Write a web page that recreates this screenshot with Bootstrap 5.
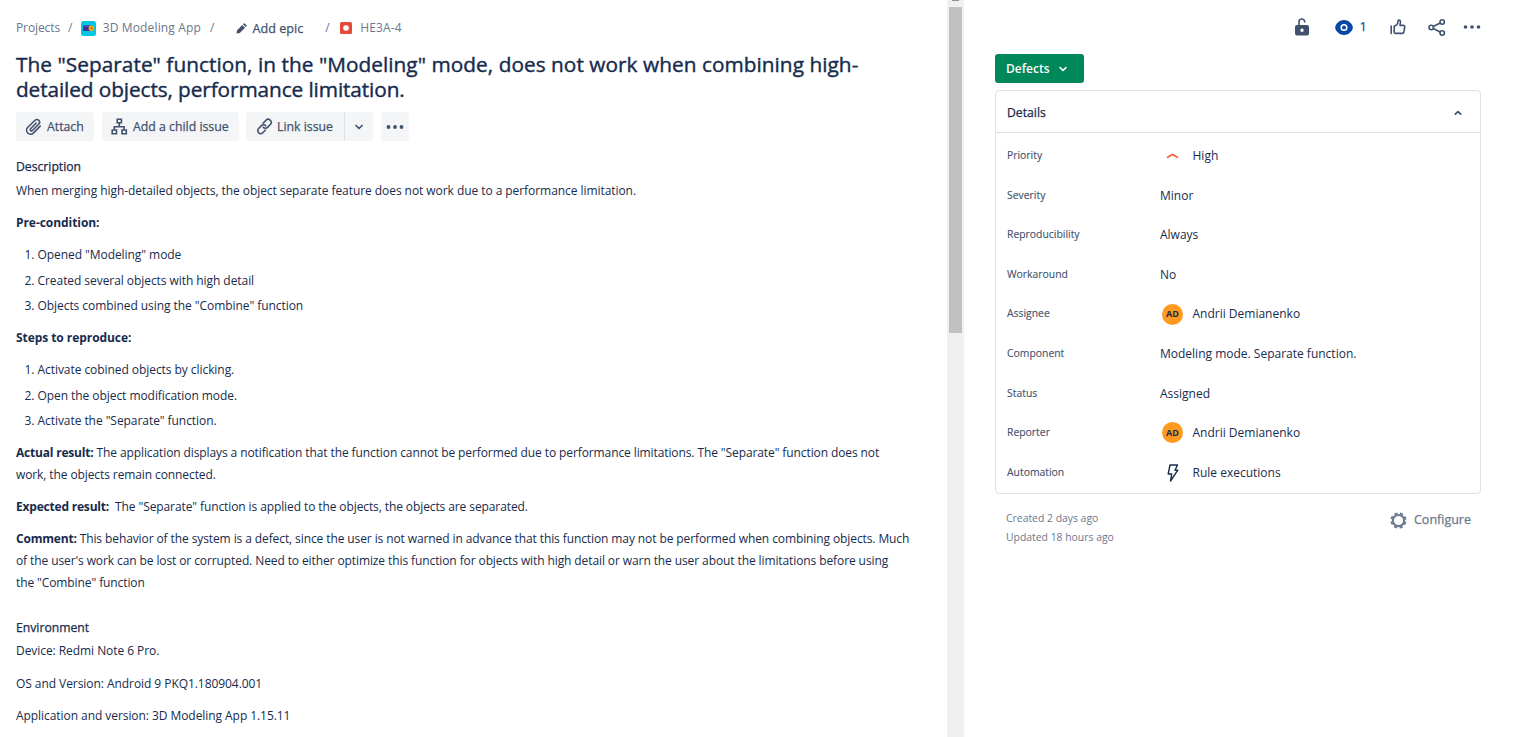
<!DOCTYPE html>
<html lang="en">
<head>
<meta charset="utf-8">
<title>HE3A-4</title>
<link href="https://cdn.jsdelivr.net/npm/bootstrap@5.3.0/dist/css/bootstrap.min.css" rel="stylesheet">
<style>
body{font-family:"Open Sans","Noto Sans",sans-serif;font-size:12px;line-height:21.6px;color:#172b4d;background:#fff;height:737px;overflow:hidden}
svg{display:block;flex:none}
.medium{-webkit-text-stroke:.25px currentColor}
.issue{width:947px;padding:0 16px;white-space:nowrap}
.crumbs{height:24px;margin-top:16px;color:#6b778c;letter-spacing:.15px}
.crumbs .root{letter-spacing:-.1px}
.crumbs .epic{color:#42526e;font-size:12.6px;letter-spacing:0;padding-top:1px}
.issue h1{font-size:20.8px;line-height:25px;font-weight:400;margin:12px 0 10px;letter-spacing:.04px;-webkit-text-stroke:.4px currentColor}
.issue h1 .rest{letter-spacing:-.1px}
.tool{background:#f4f5f7;color:#42526e;height:29px;border-radius:3px;border:0;padding:0;font-size:12.3px}
.tool.split-l{border-radius:3px 0 0 3px;border-right:1px solid #dfe1e6}
.tool.split-r{border-radius:0 3px 3px 0}
.sub{font-size:12.2px;line-height:18px;font-weight:400;margin:0}
.doc{margin-top:3.7px;letter-spacing:-.06px}
.doc p{margin:0 0 10.8px}
.doc ol{margin:0 0 10.8px;padding-left:21.5px}
.doc li{margin-bottom:3.5px}
.doc li:last-child{margin-bottom:0}
.doc b{font-weight:700}
.doc .long{letter-spacing:-.1px}
.doc .long b,.doc .tight b{letter-spacing:-.2px}
.doc .tight{letter-spacing:-.1px}
.track{width:17px;background:#f0f0f0}
.cap{width:7px;height:1px;background:#8f8f8f}
.thumb{width:13px;margin-top:6px;height:326px;background:#c1c1c1}
.side{width:486px;margin-left:31px}
.acts{height:24px;margin-top:15px;color:#42526e}
.status{background:#00875a;color:#fff;width:89px;height:29px;border-radius:3px;font-weight:600;border:0;padding:0 0 0 11px;margin-top:15px}
.panel{border:1px solid #dfe1e6;border-radius:4px;margin-top:7px;height:404px}
.panel-top{height:42px;border-bottom:1px solid #dfe1e6;padding:2px 18px 0 11px;font-size:12.2px}
.fields{padding-top:3px}
.field{height:39.6px;padding-left:11px}
.key{width:153px;font-size:10.4px;color:#42526e;-webkit-text-stroke:.12px currentColor}
.slot{width:32.5px}
.ava{width:21px;height:21px;border-radius:50%;background:#ff991f;font-size:9px;font-weight:700;margin-left:2px}
.stamp{font-size:10.4px;line-height:19px;color:#6b778c;padding:1px 0 0 11px}
.conf{color:#6b778c;font-size:12.5px;padding-right:10px}
</style>
</head>
<body>
<div class="d-flex h-100">
<main class="issue">
 <nav class="crumbs d-flex align-items-center">
  <span class="root">Projects</span><span style="margin:0 8px">/</span>
  <svg width="15" height="15" viewBox="0 0 15 15"><rect width="15" height="15" rx="2.500" fill="#00c7e6"/><rect x="2" y="4.500" width="8" height="5.500" rx=".6" fill="#403294"/><rect x="2" y="4.500" width="6" height="1.500" fill="#5243aa"/><circle cx="10.400" cy="7.200" r="2.800" fill="#ffab00"/><circle cx="10.600" cy="7.200" r="1" fill="#a35a16"/></svg>
  <span style="margin-left:7px">3D Modeling App</span><span style="margin:0 21.5px 0 9px">/</span>
  <svg width="11" height="11" viewBox="0 0 11 11" fill="#42526e"><path d="M1.100 7.200 6.300 2l2.700 2.700-5.200 5.200L.4 10.600zM7 1.300l.8-.8q.5-.4 1 0l1.700 1.700q.4.5 0 1l-.8.8z"/></svg>
  <span class="epic medium" style="margin-left:5.500px">Add epic</span><span style="margin:0 10px 0 22px">/</span>
  <svg width="12" height="12" viewBox="0 0 12 12"><rect width="12" height="12" rx="1.500" fill="#e5493a"/><circle cx="6" cy="6" r="2.800" fill="#fff"/></svg>
  <span style="margin-left:8.500px">HE3A-4</span>
 </nav>
 <h1>The "Separate" function, in the "Modeling" mode, does not work when combining high-<br><span class="rest">detailed objects, performance limitation.</span></h1>
 <div class="d-flex">
  <button class="tool medium d-flex align-items-center" style="width:78px;padding-left:9px"><svg width="17" height="17" viewBox="0 0 17 17" fill="none" stroke="#42526e" stroke-width="1.600" stroke-linecap="round"><path d="M11.200 5 5.600 10.800a1.200 1.200 0 0 0 1.800 1.700L13.800 6a2.600 2.600 0 0 0-3.800-3.700L2.600 9.500a4 4 0 0 0 5.700 5.600l6.900-7"/></svg><span style="margin-left:5px">Attach</span></button>
  <button class="tool medium d-flex align-items-center" style="width:137px;margin-left:8px;padding-left:9px"><svg width="17" height="17" viewBox="0 0 17 17" fill="none" stroke="#42526e" stroke-width="1.600"><path d="M6.200 1.200h4.200v3.600H6.200zM1.200 12h4.300v3.800H1.200zM11 12h4.300v3.800H11zM8.300 5v3.700M3.300 12V8.700h9.800V12"/></svg><span style="margin-left:5px">Add a child issue</span></button>
  <button class="tool split-l medium d-flex align-items-center" style="width:99px;margin-left:7px;padding-left:10px"><svg width="17" height="17" viewBox="0 0 17 17" fill="none" stroke="#42526e" stroke-width="1.600" stroke-linecap="round"><path d="M7.200 5.100 10 2.300a2.900 2.900 0 0 1 4.300 4.200l-2.800 2.900a2.900 2.900 0 0 1-4.200 0M9.500 12l-2.700 2.700a2.900 2.900 0 0 1-4.200-4.200l2.800-2.900a2.900 2.900 0 0 1 4.200 0"/></svg><span style="margin-left:4px">Link issue</span></button>
  <button class="tool split-r d-flex align-items-center justify-content-center" style="width:28px"><svg width="8" height="6" viewBox="0 0 8 6" fill="none" stroke="#42526e" stroke-width="1.700" stroke-linecap="round" stroke-linejoin="round"><path d="M1 1.500l3 3 3-3"/></svg></button>
  <button class="tool d-flex align-items-center justify-content-center" style="width:28px;margin-left:8px"><svg width="18" height="4" viewBox="0 0 18 4" fill="#42526e"><circle cx="2.500" cy="2" r="1.900"/><circle cx="9" cy="2" r="1.900"/><circle cx="15.500" cy="2" r="1.900"/></svg></button>
 </div>
 <h2 class="sub medium" style="margin-top:17px">Description</h2>
 <div class="doc">
  <p>When merging high-detailed objects, the object separate feature does not work due to a performance limitation.</p>
  <p><b>Pre-condition:</b></p>
  <ol><li>Opened "Modeling" mode</li><li>Created several objects with high detail</li><li>Objects combined using the "Combine" function</li></ol>
  <p><b>Steps to reproduce:</b></p>
  <ol><li>Activate cobined objects by clicking.</li><li>Open the object modification mode.</li><li>Activate the "Separate" function.</li></ol>
  <p class="long"><b>Actual result:</b> The application displays a notification that the function cannot be performed due to performance limitations. The "Separate" function does not<br>work, the objects remain connected.</p>
  <p class="tight"><b>Expected result:</b>&nbsp; The "Separate" function is applied to the objects, the objects are separated.</p>
  <p class="long"><b>Comment:</b> This behavior of the system is a defect, since the user is not warned in advance that this function may not be performed when combining objects. Much<br>of the user's work can be lost or corrupted. Need to either optimize this function for objects with high detail or warn the user about the limitations before using<br>the "Combine" function</p>
 </div>
 <h2 class="sub medium" style="margin-top:25.500px">Environment</h2>
 <div class="doc">
  <p>Device: Redmi Note 6 Pro.</p>
  <p>OS and Version: Android 9 PKQ1.180904.001</p>
  <p class="mb-0">Application and version: 3D Modeling App 1.15.11</p>
 </div>
</main>
<div class="track d-flex flex-column align-items-center"><div class="cap"></div><div class="thumb"></div></div>
<aside class="side">
 <div class="acts d-flex align-items-center justify-content-end">
  <svg width="14" height="18" viewBox="0 0 14 18"><path d="M4 8V3.800a2.900 2.900 0 0 1 5.700-.6v1.300" fill="none" stroke="#42526e" stroke-width="1.600"/><path fill-rule="evenodd" fill="#42526e" d="M2 7h10q2 0 2 2v6.500q0 2-2 2H2q-2 0-2-2V9q0-2 2-2zm5 3.600a1.700 1.700 0 1 0 0 3.400 1.700 1.700 0 0 0 0-3.400z"/></svg>
  <svg style="margin-left:25.500px" width="18" height="15" viewBox="0 0 18 15"><path d="M9 0C4 0 .2 4.600.2 7.500S4 15 9 15s8.800-4.600 8.800-7.500S14 0 9 0z" fill="#0747a6"/><circle cx="9" cy="7.500" r="2.800" fill="none" stroke="#fff" stroke-width="1.600"/></svg>
  <span class="medium" style="margin-left:7px;color:#0747a6">1</span>
  <svg style="margin-left:23.500px" width="16" height="16" viewBox="0 0 16 16" fill="none" stroke="#42526e" stroke-width="1.600" stroke-linejoin="round" stroke-linecap="round"><path d="M1.200 7v7.500M4.200 7.200 7 5.600Q8 4 8 2.300q0-1.300 1.200-1.200 1.300.1 1.300 2L10 6.400h3.200q1.700 0 1.500 1.600l-.8 5q-.3 1.400-1.600 1.400H5.800q-1.600 0-1.600-1.500z"/></svg>
  <svg style="margin-left:21.500px" width="18" height="17" viewBox="0 0 18 17" fill="none" stroke="#42526e" stroke-width="1.600"><circle cx="3.200" cy="8.500" r="2.200"/><circle cx="14.200" cy="3" r="2.200"/><circle cx="14.200" cy="14" r="2.200"/><path d="M5.200 7.500 12.200 4M5.200 9.500l7 3.500"/></svg>
  <svg style="margin-left:17.500px" width="18" height="4" viewBox="0 0 18 4" fill="#42526e"><circle cx="2.500" cy="2" r="1.800"/><circle cx="9" cy="2" r="1.800"/><circle cx="15.500" cy="2" r="1.800"/></svg>
 </div>
 <button class="status d-flex align-items-center">Defects<svg style="margin:1px 0 0 9.500px" width="8" height="6" viewBox="0 0 8 6" fill="none" stroke="#fff" stroke-width="1.600" stroke-linecap="round" stroke-linejoin="round"><path d="M1 1.500l3 3 3-3"/></svg></button>
 <section class="panel">
  <div class="panel-top medium d-flex align-items-center justify-content-between">Details<svg width="8" height="6" viewBox="0 0 8 6" fill="none" stroke="#42526e" stroke-width="1.700" stroke-linecap="round" stroke-linejoin="round"><path d="M1.300 4.200 4 1.600l2.700 2.600"/></svg></div>
  <div class="fields">
   <div class="field d-flex align-items-center"><span class="key">Priority</span><span class="slot"><svg style="margin-left:6px" width="13" height="6" viewBox="0 0 13 6" fill="none" stroke="#ff5630" stroke-width="1.700" stroke-linecap="round"><path d="M1.500 4.400Q4 2.800 6.500 1.600 9 2.800 11.500 4.400"/></svg></span>High</div>
   <div class="field d-flex align-items-center"><span class="key">Severity</span>Minor</div>
   <div class="field d-flex align-items-center"><span class="key">Reproducibility</span>Always</div>
   <div class="field d-flex align-items-center"><span class="key">Workaround</span>No</div>
   <div class="field d-flex align-items-center"><span class="key">Assignee</span><span class="slot"><span class="ava d-flex align-items-center justify-content-center">AD</span></span>Andrii Demianenko</div>
   <div class="field d-flex align-items-center"><span class="key">Component</span>Modeling mode. Separate function.</div>
   <div class="field d-flex align-items-center"><span class="key">Status</span>Assigned</div>
   <div class="field d-flex align-items-center"><span class="key">Reporter</span><span class="slot"><span class="ava d-flex align-items-center justify-content-center">AD</span></span>Andrii Demianenko</div>
   <div class="field d-flex align-items-center"><span class="key">Automation</span><span class="slot"><svg style="margin-left:7px" width="12" height="18" viewBox="0 0 12 18" fill="none" stroke="#172b4d" stroke-width="1.400" stroke-linejoin="round"><path d="M3 1h7.500L8 6.200h2.800L3.500 17l1.200-7H1.200z"/></svg></span>Rule executions</div>
  </div>
 </section>
 <div class="d-flex justify-content-between" style="margin-top:14px">
  <div class="stamp">Created 2 days ago<br>Updated 18 hours ago</div>
  <div class="conf medium d-flex align-items-center" style="height:24px"><svg width="17" height="17" viewBox="-8.500 -8.500 17 17" fill="none" stroke="#6b778c"><circle r="5.600" stroke-width="2"/><circle r="7.200" stroke-width="1.800" stroke-dasharray="3.300 2.355" stroke-dashoffset="-1.200"/></svg><span style="margin-left:7px">Configure</span></div>
 </div>
</aside>
</div>
<script src="https://cdn.jsdelivr.net/npm/bootstrap@5.3.0/dist/js/bootstrap.bundle.min.js"></script>
</body>
</html>
